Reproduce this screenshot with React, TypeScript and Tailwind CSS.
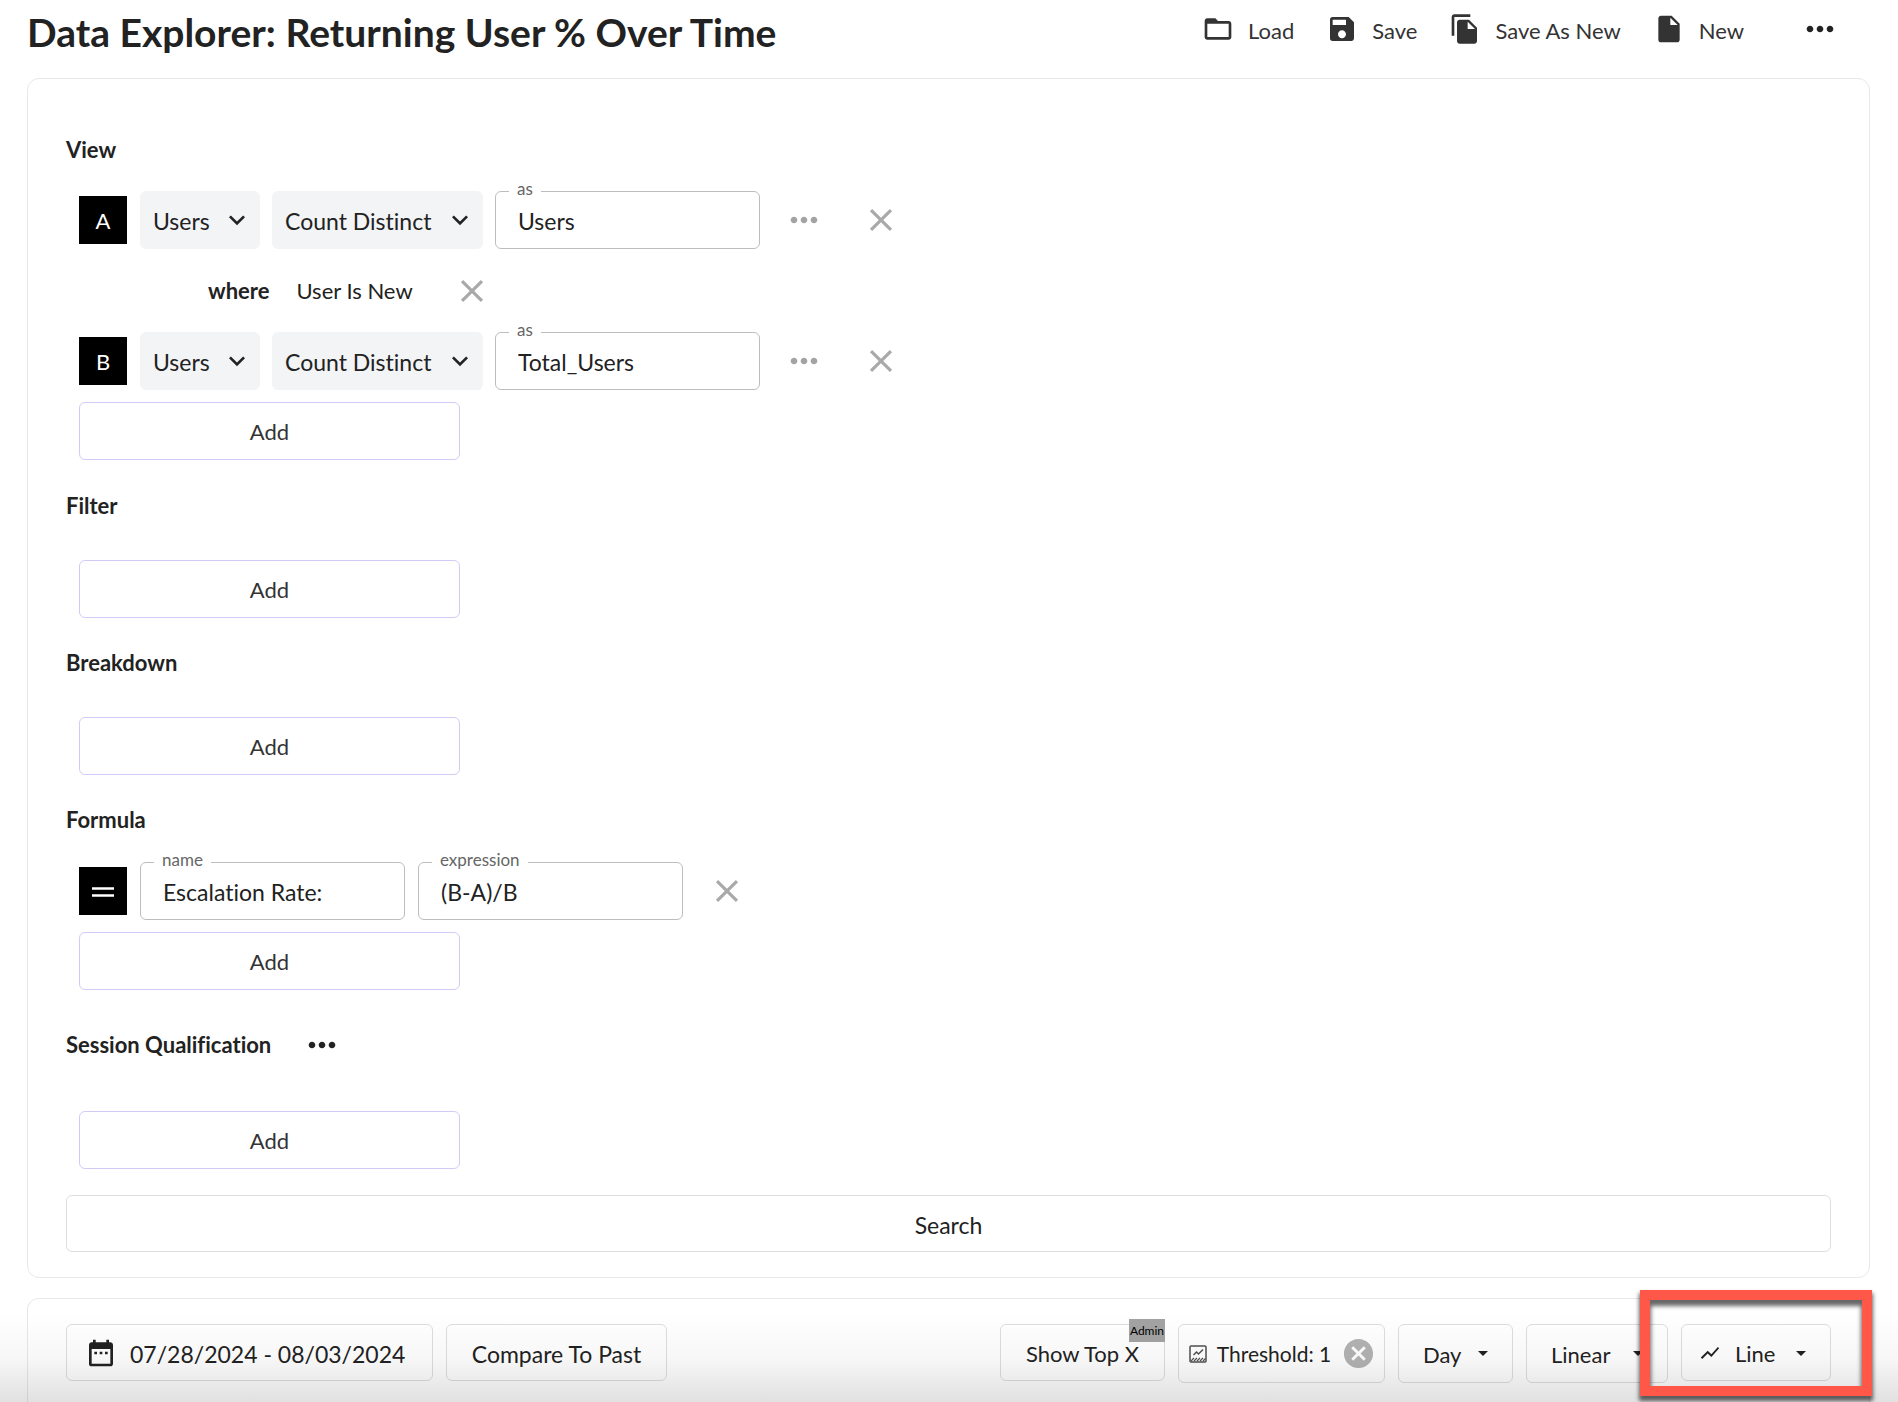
import React from "react";
import {
  MdArrowDropDown,
  MdCancel,
  MdClose,
  MdDateRange,
  MdExpandMore,
  MdFileCopy,
  MdFolderOpen,
  MdInsertDriveFile,
  MdMoreHoriz,
  MdSave,
  MdShowChart,
} from "react-icons/md";

function ToolbarButton({ icon, children }: { icon: React.ReactNode; children: React.ReactNode }) {
  return (
    <button className="flex items-center gap-[14px] text-[#333]">
      {icon}
      <span className="pt-1">{children}</span>
    </button>
  );
}

function Letter({ children }: { children: React.ReactNode }) {
  return (
    <div className="flex size-12 shrink-0 items-center justify-center bg-black pt-0.5 text-white">{children}</div>
  );
}

function GreySelect({ label, value, wide }: { label: string; value: string; wide?: boolean }) {
  return (
    <div className={wide ? "relative w-[211px]" : "relative w-[120px]"}>
      <select
        aria-label={label}
        defaultValue={value}
        className="h-[58px] w-full appearance-none rounded-md bg-[#f3f4f6] pt-0.5 pl-[13px] text-[23px]"
      >
        <option>{value}</option>
      </select>
      <MdExpandMore size={32} className="pointer-events-none absolute top-[13px] right-[7px]" />
    </div>
  );
}

function Field({ id, label, value }: { id: string; label: string; value: string }) {
  return (
    <div className="relative w-[265px]">
      <input
        id={id}
        defaultValue={value}
        className="h-[58px] w-full rounded-md border border-[#bdbdbd] bg-white px-[22px] pt-0.5 text-[23px]"
      />
      <label htmlFor={id} className="absolute -top-3 left-[14px] bg-white px-2 text-[17px] leading-5 text-[#666]">
        {label}
      </label>
    </div>
  );
}

function RemoveButton() {
  return (
    <button aria-label="Remove" className="text-[#a9a9a9]">
      <MdClose size={38} />
    </button>
  );
}

function Dots({ label }: { label: string }) {
  return (
    <button aria-label={label}>
      <MdMoreHoriz size={40} />
    </button>
  );
}

function AddButton() {
  return (
    <button className="ml-[13px] block h-[58px] w-[381px] rounded-md border border-[#d0ccf8] pt-0.5 text-[#333]">
      Add
    </button>
  );
}

function Heading({ children }: { children: React.ReactNode }) {
  return <h2 className="h-[30px] font-bold leading-[30px]">{children}</h2>;
}

function ViewRow({ letter, name }: { letter: string; name: string }) {
  return (
    <div className="ml-[13px] flex items-center">
      <Letter>{letter}</Letter>
      <div className="ml-[13px] flex items-center gap-3">
        <GreySelect label={"Field " + letter} value="Users" />
        <GreySelect label={"Aggregation " + letter} value="Count Distinct" wide />
        <Field id={"as-" + letter} label="as" value={name} />
      </div>
      <div className="ml-6 flex text-[#a3a3a3]">
        <Dots label={"More options for " + letter} />
      </div>
      <div className="ml-[38px] flex">
        <RemoveButton />
      </div>
    </div>
  );
}

function ThresholdIcon() {
  return (
    <svg width="18" height="18" viewBox="0 0 18 18" fill="none" stroke="#505050" strokeWidth="1.5">
      <rect x="1" y="1" width="16" height="16" rx="1" />
      <path d="M4.500 10l3-3 2 2L14 4.500" />
      <path d="M2 16l3-3M5 16l3-3M8 16l3-3M11 16l3-3M14 16l2.500-2.500" strokeWidth="1.2" />
    </svg>
  );
}

export default function App() {
  return (
    <div className="relative flex min-h-screen flex-col overflow-hidden bg-white pr-7 pl-[27px] font-[Lato,sans-serif] text-[22px] leading-7 text-[#222] [font-variant-ligatures:none]">
      <header className="flex h-[78px] items-start justify-between pr-[30px]">
        <h1 className="pt-2 text-[39px] font-bold leading-[48px]">Data Explorer: Returning User % Over Time</h1>
        <div className="flex items-center gap-8 pt-[9px]">
          <ToolbarButton icon={<MdFolderOpen size={32} />}>Load</ToolbarButton>
          <ToolbarButton icon={<MdSave size={32} />}>Save</ToolbarButton>
          <ToolbarButton icon={<MdFileCopy size={32} />}>Save As New</ToolbarButton>
          <ToolbarButton icon={<MdInsertDriveFile size={32} />}>New</ToolbarButton>
          <div className="ml-6 flex">
            <Dots label="More actions" />
          </div>
        </div>
      </header>

      <main className="rounded-xl border border-[#e8e8e8] px-[38px] pt-14 pb-[25px]">
        {/* View */}
        <Heading>View</Heading>
        <div className="mt-[26px]">
          <ViewRow letter="A" name="Users" />
          <div className="flex h-[83px] items-center pl-[142px]">
            <span className="font-bold">where</span>
            <span className="ml-[27px]">User Is New</span>
            <div className="ml-10 flex">
              <RemoveButton />
            </div>
          </div>
          <ViewRow letter="B" name="Total_Users" />
          <div className="mt-3">
            <AddButton />
          </div>
        </div>

        {/* Filter */}
        <div className="mt-[31px]">
          <Heading>Filter</Heading>
          <div className="mt-[39px]">
            <AddButton />
          </div>
        </div>

        {/* Breakdown */}
        <div className="mt-[30px]">
          <Heading>Breakdown</Heading>
          <div className="mt-[39px]">
            <AddButton />
          </div>
        </div>

        {/* Formula */}
        <div className="mt-[30px]">
          <Heading>Formula</Heading>
          <div className="mt-[27px] ml-[13px] flex items-center">
            <Letter>
              <svg width="22" height="10" viewBox="0 0 22 10" stroke="white" strokeWidth="2.500">
                <path d="M0 1.500h22M0 8.500h22" />
              </svg>
            </Letter>
            <div className="ml-[13px] flex gap-[13px]">
              <Field id="formula-name" label="name" value="Escalation Rate:" />
              <Field id="formula-expression" label="expression" value="(B-A)/B" />
            </div>
            <div className="ml-[25px] flex">
              <RemoveButton />
            </div>
          </div>
          <div className="mt-3">
            <AddButton />
          </div>
        </div>

        {/* Session Qualification */}
        <div className="mt-10">
          <div className="flex h-[30px] items-center gap-[31px]">
            <Heading>Session Qualification</Heading>
            <Dots label="Session options" />
          </div>
          <div className="mt-[51px]">
            <AddButton />
          </div>
        </div>

        <button className="mt-[26px] h-[57px] w-full rounded-md border border-[#dedede] pt-0.5 text-[23px]">Search</button>
      </main>

      <section className="mt-5 flex flex-1 items-start justify-between rounded-t-xl border border-b-0 border-[#e8e8e8] px-[38px] pt-[25px]">
        <div className="flex gap-[13px]">
          <button className="flex h-[57px] w-[367px] items-center gap-[13px] rounded-md border border-[#dedede] pl-[18px] text-[23px]">
            <MdDateRange size={32} />
            <span className="pt-0.5">07/28/2024 - 08/03/2024</span>
          </button>
          <button className="h-[57px] w-[221px] rounded-md border border-[#dedede] pt-0.5 text-[23px]">
            Compare To Past
          </button>
        </div>
        <div className="flex items-start gap-[13px]">
          <button className="relative h-[57px] w-[165px] rounded-md border border-[#dedede] pt-0.5">
            Show Top X
            <span className="absolute -top-1.5 -right-px h-[23px] w-9 bg-[#a3a3a3] text-center text-xs leading-[23px] text-black">
              Admin
            </span>
          </button>
          <div className="flex h-[59px] w-[207px] items-center justify-between rounded-md border border-[#dedede] pr-2 pl-2.5">
            <ThresholdIcon />
            <span className="text-[21px]">Threshold: 1</span>
            <button aria-label="Clear threshold" className="text-[#b3b3b3]">
              <MdCancel size={35} />
            </button>
          </div>
          <div className="relative w-[115px]">
            <select aria-label="Interval" className="h-[59px] w-full appearance-none rounded-md border border-[#dedede] pt-0.5 pl-6">
              <option>Day</option>
            </select>
            <MdArrowDropDown size={24} className="pointer-events-none absolute top-[17px] right-[18px]" />
          </div>
          <div className="relative w-[142px]">
            <select aria-label="Scale" className="h-[59px] w-full appearance-none rounded-md border border-[#dedede] pt-0.5 pl-6">
              <option>Linear</option>
            </select>
            <MdArrowDropDown size={24} className="pointer-events-none absolute top-[17px] right-[18px]" />
          </div>
          <div className="relative w-[150px]">
            <MdShowChart size={22} className="pointer-events-none absolute top-[18px] left-[18px]" />
            <select aria-label="Chart type" className="h-[57px] w-full appearance-none rounded-md border border-[#dedede] pt-0.5 pl-[53px]">
              <option>Line</option>
            </select>
            <MdArrowDropDown size={24} className="pointer-events-none absolute top-[17px] right-[18px]" />
          </div>
        </div>
      </section>

      {/* fade at the bottom edge */}
      <div className="pointer-events-none absolute inset-x-0 bottom-0 h-[90px] bg-linear-to-b from-transparent via-black/3 to-black/12" />
      {/* callout round the chart type */}
      <div className="pointer-events-none absolute right-[26px] bottom-1.5 h-[106px] w-[232px] border-10 border-[#ff5849] shadow-[0_4px_4px_1px_rgba(0,0,0,0.6),inset_0_5px_4px_1px_rgba(0,0,0,0.6)]" />
    </div>
  );
}
